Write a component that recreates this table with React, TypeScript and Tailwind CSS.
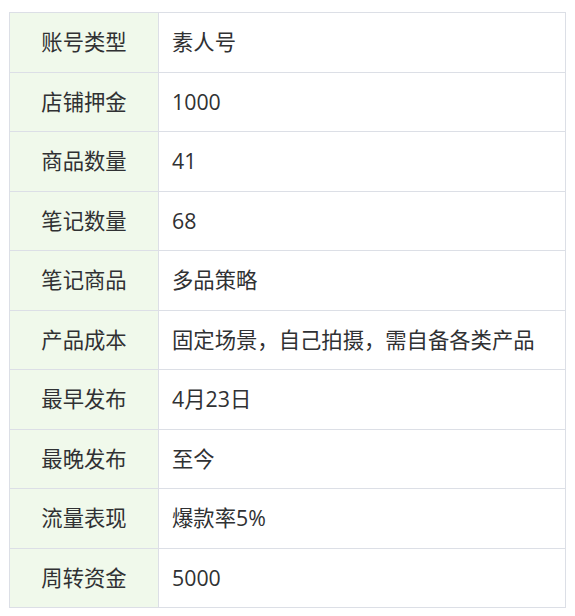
const rows: [string, string][] = [
  ['账号类型', '素人号'],
  ['店铺押金', '1000'],
  ['商品数量', '41'],
  ['笔记数量', '68'],
  ['笔记商品', '多品策略'],
  ['产品成本', '固定场景，自己拍摄，需自备各类产品'],
  ['最早发布', '4月23日'],
  ['最晚发布', '至今'],
  ['流量表现', '爆款率5%'],
  ['周转资金', '5000'],
]

export default function App() {
  return (
    <div className="bg-white min-h-screen pt-[12px] pl-[9px] pr-[9px]">
      <table
        className="w-[557px] border-collapse text-[21.33px] text-[#303133]"
        style={{ fontFamily: '"Open Sans", "Noto Sans CJK SC", sans-serif' }}
      >
        <tbody>
          {rows.map(([label, value]) => (
            <tr key={label} className="h-[59.5px]">
              <td className="w-[149px] border border-[#dcdfe6] bg-[#f0f9eb] text-center align-middle p-0">
                {label}
              </td>
              <td className="border border-[#dcdfe6] pl-[13px] align-middle p-0">{value}</td>
            </tr>
          ))}
        </tbody>
      </table>
    </div>
  )
}
